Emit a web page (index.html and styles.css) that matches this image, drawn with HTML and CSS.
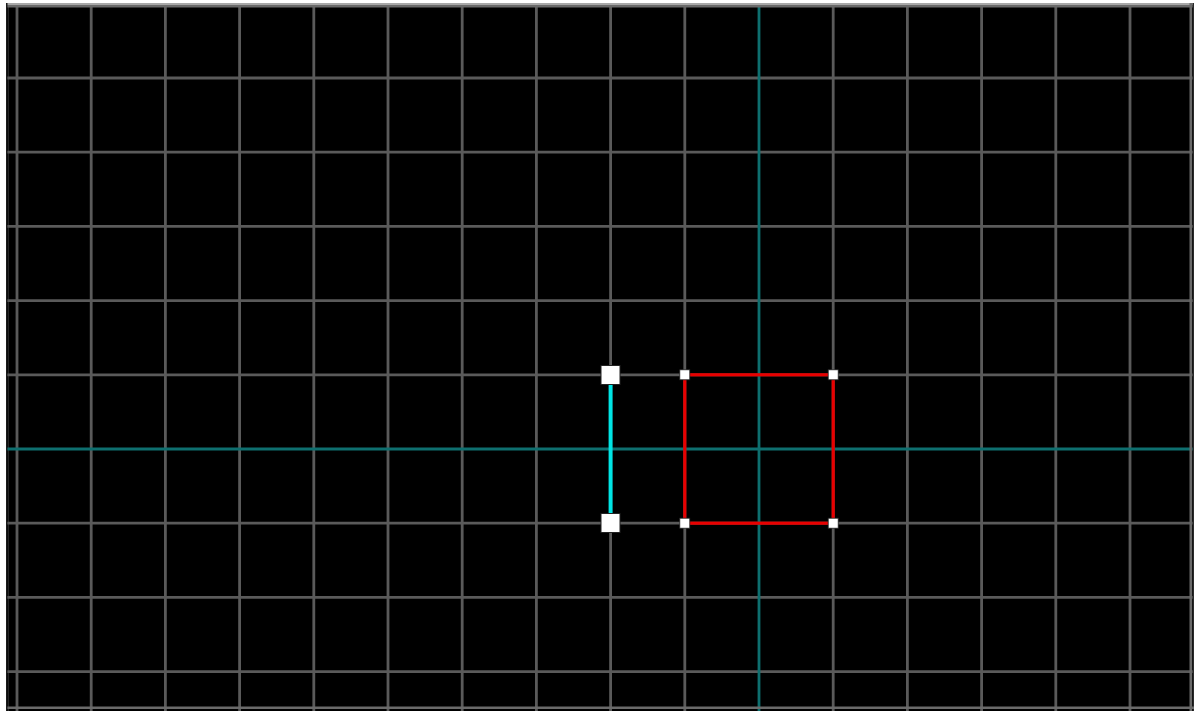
FILE: index.html
```html
<!DOCTYPE html>
<html>
<head>
<meta charset="utf-8">
<link rel="stylesheet" href="styles.css">
</head>
<body>
<div class="canvas">
<svg class="board" viewBox="6 3 1188 708" width="1188" height="708" xmlns="http://www.w3.org/2000/svg">
  <rect x="6" y="3" width="1188" height="708" fill="#000"/>
  <g stroke="#262626" stroke-width="1">
    <line x1="8.5" y1="3" x2="8.5" y2="711"/>
  </g>
  <g stroke="#5a5a5a" stroke-width="2.8">
    <line x1="17" y1="3" x2="17" y2="711"/>
    <line x1="91.2" y1="3" x2="91.2" y2="711"/>
    <line x1="165.4" y1="3" x2="165.4" y2="711"/>
    <line x1="239.6" y1="3" x2="239.6" y2="711"/>
    <line x1="313.8" y1="3" x2="313.8" y2="711"/>
    <line x1="388" y1="3" x2="388" y2="711"/>
    <line x1="462.2" y1="3" x2="462.2" y2="711"/>
    <line x1="536.4" y1="3" x2="536.4" y2="711"/>
    <line x1="610.6" y1="3" x2="610.6" y2="711"/>
    <line x1="684.8" y1="3" x2="684.8" y2="711"/>
    <line x1="833.2" y1="3" x2="833.2" y2="711"/>
    <line x1="907.4" y1="3" x2="907.4" y2="711"/>
    <line x1="981.6" y1="3" x2="981.6" y2="711"/>
    <line x1="1055.8" y1="3" x2="1055.8" y2="711"/>
    <line x1="1130" y1="3" x2="1130" y2="711"/>
    <line x1="6" y1="78" x2="1194" y2="78"/>
    <line x1="6" y1="152.2" x2="1194" y2="152.2"/>
    <line x1="6" y1="226.4" x2="1194" y2="226.4"/>
    <line x1="6" y1="300.6" x2="1194" y2="300.6"/>
    <line x1="6" y1="374.8" x2="1194" y2="374.8"/>
    <line x1="6" y1="523.2" x2="1194" y2="523.2"/>
    <line x1="6" y1="597.4" x2="1194" y2="597.4"/>
    <line x1="6" y1="671.6" x2="1194" y2="671.6"/>
  </g>
  <g stroke="#0e6f6f" stroke-width="2.8">
    <line x1="759" y1="3" x2="759" y2="711"/>
    <line x1="6" y1="449" x2="1194" y2="449"/>
  </g>
  <!-- frame edges -->
  <rect x="6" y="3" width="1188" height="2" fill="#a8a8a8"/>
  <rect x="6" y="5" width="1188" height="2.5" fill="#6a6a6a"/>
  <rect x="1189.5" y="3" width="2.5" height="708" fill="#6a6a6a"/>
  <rect x="1192.5" y="3" width="1.5" height="708" fill="#2a2a2a"/>
  <rect x="6" y="706.5" width="1188" height="2.5" fill="#6a6a6a"/>
  <rect x="6" y="3" width="1.5" height="708" fill="#1a1a1a"/>
  <!-- cyan segment -->
  <line x1="610.6" y1="375" x2="610.6" y2="523" stroke="#00e5e5" stroke-width="4"/>
  <rect x="601" y="365.5" width="19" height="19" fill="#fff" stroke="#222" stroke-width="1"/>
  <rect x="601" y="513.5" width="19" height="19" fill="#fff" stroke="#222" stroke-width="1"/>
  <!-- red square -->
  <rect x="684.8" y="374.8" width="148.4" height="148.4" fill="none" stroke="#e80000" stroke-width="3.2"/>
  <rect x="679.8" y="369.8" width="10" height="10" fill="#fff" stroke="#222" stroke-width="0.8"/>
  <rect x="828.2" y="369.8" width="10" height="10" fill="#fff" stroke="#222" stroke-width="0.8"/>
  <rect x="679.8" y="518.2" width="10" height="10" fill="#fff" stroke="#222" stroke-width="0.8"/>
  <rect x="828.2" y="518.2" width="10" height="10" fill="#fff" stroke="#222" stroke-width="0.8"/>
</svg>
</div>
</body>
</html>
```

FILE: styles.css
```css
html, body {
  margin: 0;
  padding: 0;
  background: #ffffff;
  width: 1200px;
  height: 717px;
  overflow: hidden;
}

.canvas {
  margin: 3px 0 0 6px;
  width: 1188px;
  height: 708px;
}

.board {
  display: block;
}
```
